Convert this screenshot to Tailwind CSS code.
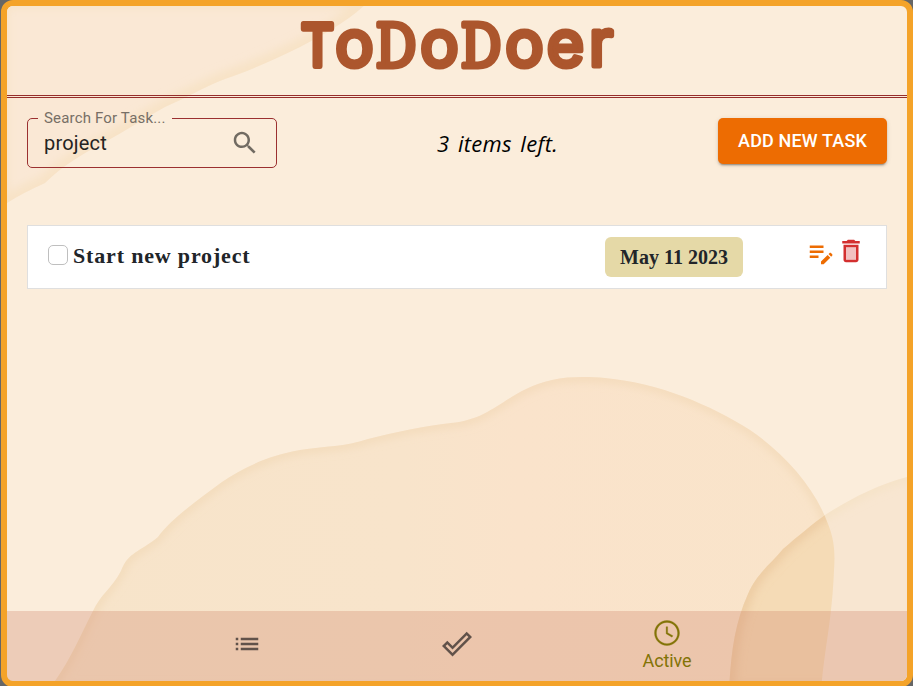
<!DOCTYPE html>
<html lang="en">
<head>
<meta charset="utf-8">
<title>ToDoDoer</title>
<script src="https://cdn.jsdelivr.net/npm/@tailwindcss/browser@4"></script>
</head>
<body class="h-[686px] overflow-hidden bg-[#666] pl-px font-[Roboto,sans-serif]">
<div class="relative isolate flex h-[687px] w-[912px] flex-col rounded-xl border-6 border-[#f4a329] bg-[#fbeddb]">
  <svg class="absolute inset-0 -z-10 h-[675px] w-[900px] rounded-md" viewBox="7 6 900 675" aria-hidden="true">
    <defs>
      <filter id="soft" x="-10%" y="-10%" width="120%" height="120%"><feGaussianBlur stdDeviation="4"/></filter>
      <linearGradient id="g"><stop offset="0" stop-color="#f7e4ca"/><stop offset=".45" stop-color="#f8e4cb"/><stop offset=".6" stop-color="#fae3cb"/><stop offset="1" stop-color="#f9e4ca"/></linearGradient>
      <path id="a" d="M0 0H370C350 20 325 34 300 47C270 62 245 72 225 79C200 89 190 96 165 107C145 118 125 131 105 142C80 155 60 168 45 183C28 191 15 197 0 208Z"/>
      <path id="b" d="M48 690C68 666 78 640 93 611C100 595 112 588 121 571C128 552 140 552 158 537C170 520 195 502 222 482C240 470 265 456 300 450C325 446 345 447 368 439C395 432 425 426 451 423C495 419 505 391 552 380C570 376 590 377 605 378C660 383 710 405 750 430C785 454 815 488 828 524C835 541 835 556 834 570C832 620 825 645 821 690Z"/>
      <path id="c" d="M729 690C731 655 734 625 748 594C757 573 770 565 783 549C798 536 814 523 825 515C850 499 880 483 915 475V690Z"/>
      <clipPath id="ca"><use href="#a"/></clipPath>
      <clipPath id="cb"><use href="#b"/></clipPath>
      <clipPath id="cc"><use href="#c"/></clipPath>
    </defs>
    <use href="#a" fill="#fae8d5"/>
    <g clip-path="url(#ca)"><use href="#a" fill="none" stroke="#f6e0bf" stroke-opacity=".65" stroke-width="16" filter="url(#soft)"/></g>
    <use href="#b" fill="url(#g)"/>
    <g clip-path="url(#cb)"><use href="#b" fill="none" stroke="#f0d6b0" stroke-opacity=".6" stroke-width="9" filter="url(#soft)"/></g>
    <use href="#c" fill="#f8e6d1"/>
    <g clip-path="url(#cc)"><use href="#b" fill="#f5dbb6"/><use href="#c" fill="none" stroke="#f4dfbd" stroke-opacity=".5" stroke-width="10" filter="url(#soft)"/>
      <g clip-path="url(#cb)"><use href="#c" fill="none" stroke="#e9c294" stroke-opacity=".6" stroke-width="12" filter="url(#soft)"/></g>
    </g>
  </svg>

  <header class="flex h-[92px] shrink-0 justify-center border-b-3 border-double border-[#962d2b]">
    <h1 class="-mt-[6px] h-[92px] w-[320px]">
      <svg class="h-[92px] w-[320px] overflow-visible" viewBox="297 0 320 92" role="img" aria-label="ToDoDoer">
        <g class="font-[Inter,sans-serif]" fill="#ac562d" stroke="#ac562d" stroke-width="5" stroke-linejoin="round" text-anchor="middle" font-size="64">
          <text x="317.500" y="66" font-size="58" stroke-width="6" textLength="33" lengthAdjust="spacingAndGlyphs">T</text>
          <text x="354.500" y="66">o</text>
          <text class="font-['DejaVu_Serif',serif]" x="396" y="67" font-size="59" textLength="41" lengthAdjust="spacingAndGlyphs">D</text>
          <text x="439.500" y="66">o</text>
          <text class="font-['DejaVu_Serif',serif]" x="481" y="67" font-size="59" textLength="41" lengthAdjust="spacingAndGlyphs">D</text>
          <text x="524.500" y="66">o</text>
          <text x="565.500" y="66">e</text>
          <text x="601" y="66">r</text>
        </g>
      </svg>
    </h1>
  </header>

  <main class="flex-1 px-5 pt-5">
    <div class="flex items-start justify-between">
      <div class="relative flex h-[50px] w-[250px] items-center justify-between pr-[17px] pl-[17px]">
        <fieldset class="pointer-events-none absolute inset-x-0 -top-[9px] bottom-0 rounded-[5px] border border-[#9b3030] pl-[10px]">
          <legend class="h-[18px] px-[6px] text-[15px] leading-[18px] tracking-[.17px] whitespace-nowrap text-[#776f66]">Search For Task...</legend>
        </fieldset>
        <span class="text-[20px] leading-6 tracking-[.2px] text-[#242322]">project</span>
        <svg class="size-[30px]" viewBox="0 0 24 24" fill="#716b62"><path d="M15.5 14h-.79l-.28-.27C15.41 12.59 16 11.11 16 9.5 16 5.91 13.09 3 9.5 3S3 5.91 3 9.5 5.91 16 9.5 16c1.61 0 3.09-.59 4.23-1.57l.27.28v.79l5 4.99L20.49 19l-4.99-5zm-6 0C7.01 14 5 11.99 5 9.5S7.01 5 9.5 5 14 7.01 14 9.5 11.99 14 9.5 14z"/></svg>
      </div>
      <p class="mt-[11px] font-['Open_Sans',sans-serif] text-[22px] leading-7 tracking-[.3px] text-black italic [word-spacing:2.5px]">3 items left.</p>
      <button class="h-[46px] w-[169px] rounded-[5px] bg-[#ed6c02] pb-[2px] text-[18px] font-medium tracking-[.15px] whitespace-nowrap text-white shadow-[0_3px_1px_-2px_rgba(0,0,0,.2),0_2px_2px_rgba(0,0,0,.14),0_1px_5px_rgba(0,0,0,.12)]">ADD NEW TASK</button>
    </div>

    <div class="mt-[57px] flex h-[64px] items-start border border-[#dfdfdf] bg-white pl-5">
      <div class="mt-[19px] size-5 rounded-[5px] border border-[#bfbfbf]"></div>
      <h2 class="mt-[16px] ml-[5px] w-[532px] font-['Liberation_Serif',serif] text-[22px] leading-[28px] font-bold tracking-[.83px] text-[#212529]">Start new project</h2>
      <div class="mt-[11px] h-10 w-[138px] rounded-md bg-[#e5d9a7] text-center font-['Liberation_Serif',serif] text-[20px] leading-[41px] font-bold text-[#212529]">May 11 2023</div>
      <svg class="mt-[12px] ml-[63px] size-[30px]" viewBox="0 0 24 24" fill="#ed6c02"><path d="M3 10h11v2H3v-2zm0-2h11V6H3v2zm0 8h7v-2H3v2zm15.01-3.13.71-.71c.39-.39 1.02-.39 1.41 0l.71.71c.39.39.39 1.02 0 1.41l-.71.71-2.12-2.12zm-.71.71-5.3 5.3V21h2.12l5.3-5.3-2.12-2.12z"/></svg>
      <svg class="mt-[10px] size-[30px]" viewBox="0 0 24 24" fill="#d32f2f"><path opacity=".3" d="M8 9h8v10H8z"/><path d="M15.5 4l-1-1h-5l-1 1H5v2h14V4h-3.500zM6 19c0 1.100.9 2 2 2h8c1.100 0 2-.9 2-2V7H6v12zM8 9h8v10H8V9z"/></svg>
    </div>
  </main>

  <nav class="flex h-[70px] shrink-0 justify-center rounded-b-md bg-[#cd8067]/30 text-[#61524a]">
    <a class="flex w-[210px] items-center justify-center pb-1"><svg class="size-[30px]" viewBox="0 0 24 24" fill="currentColor"><path d="M3 13h2v-2H3v2zm0 4h2v-2H3v2zm0-8h2V7H3v2zm4 4h14v-2H7v2zm0 4h14v-2H7v2zM7 7v2h14V7H7z"/></svg></a>
    <a class="flex w-[210px] items-center justify-center pb-1"><svg class="size-[30px]" viewBox="0 0 24 24" fill="currentColor"><path d="M19.77 5.03l1.400 1.400L8.430 19.170l-5.600-5.600 1.400-1.400 4.200 4.200L19.770 5.030m0-2.830L8.430 13.540l-4.200-4.200L0 13.570 8.430 22 24 6.430 19.770 2.200z"/></svg></a>
    <a class="flex w-[210px] flex-col items-center pt-[7px] text-[#827306]"><svg class="size-[30px]" viewBox="0 0 24 24" fill="currentColor" stroke="currentColor" stroke-width=".25"><path d="M11.990 2C6.470 2 2 6.480 2 12s4.470 10 9.990 10C17.520 22 22 17.520 22 12S17.520 2 11.990 2zM12 20.500c-4.700 0-8.500-3.800-8.500-8.500S7.300 3.500 12 3.500s8.500 3.800 8.500 8.500-3.800 8.500-8.500 8.500zM12.500 7H11.300v5.600l4.700 2.700.7-1.200-4.200-2.300z"/></svg><span class="mt-px text-[18px] leading-6 tracking-[-.1px]">Active</span></a>
  </nav>
</div>
</body>
</html>
